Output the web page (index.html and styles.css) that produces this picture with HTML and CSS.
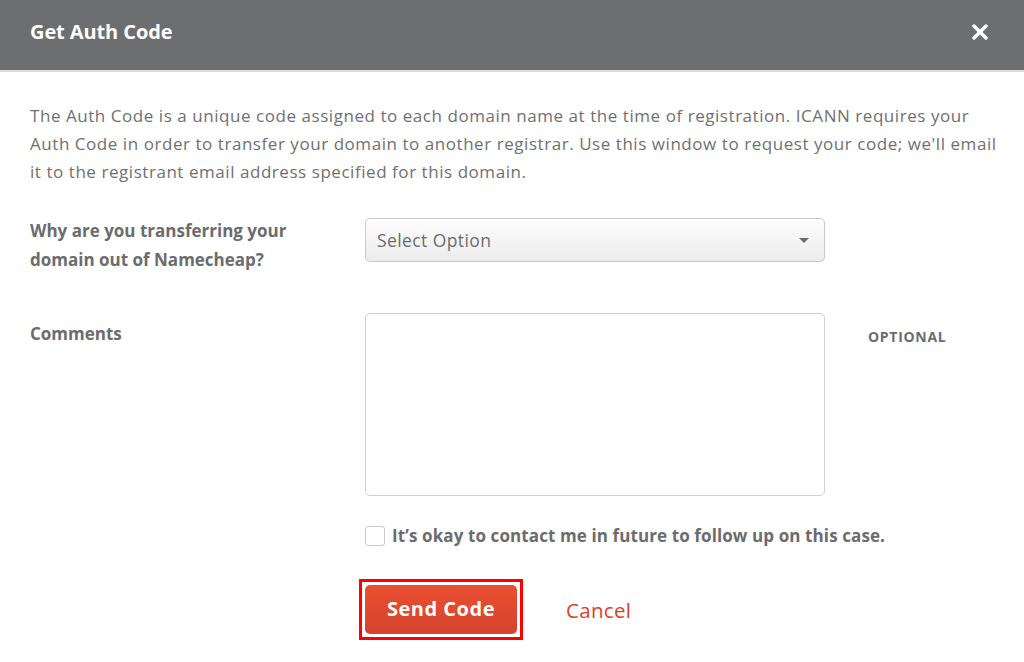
FILE: index.html
```html
<!DOCTYPE html>
<html>
<head>
<meta charset="utf-8">
<link rel="stylesheet" href="styles.css">
</head>
<body>
<div class="modal">
  <div class="modal-header">
    <h1 class="title">Get Auth Code</h1>
    <span class="close" aria-label="close">
      <svg width="16" height="16" viewBox="0 0 16 16"><path d="M2 2 L14 14 M14 2 L2 14" stroke="#fff" stroke-width="3.4" stroke-linecap="round"/></svg>
    </span>
  </div>
  <div class="modal-body">
    <p class="intro">The Auth Code is a unique code assigned to each domain name at the time of registration. ICANN requires your Auth Code in order to transfer your domain to another registrar. Use this window to request your code; we'll email it to the registrant email address specified for this domain.</p>
    <div class="row row-select">
      <label class="label">Why are you transferring your domain out of Namecheap?</label>
      <div class="select">
        <span>Select Option</span>
        <span class="caret"></span>
      </div>
      <div></div>
    </div>
    <div class="row row-comments">
      <label class="label label-comments">Comments</label>
      <div class="textarea"></div>
      <div class="optional">OPTIONAL</div>
    </div>
    <div class="row row-check">
      <div></div>
      <label class="check"><span class="box"></span>It’s okay to contact me in future to follow up on this case.</label>
    </div>
    <div class="row row-actions">
      <div></div>
      <div class="actions">
        <span class="highlight"><button class="btn">Send Code</button></span>
        <a class="cancel">Cancel</a>
      </div>
    </div>
  </div>
</div>
</body>
</html>
```

FILE: styles.css
```css
html, body {
  margin: 0;
  padding: 0;
  background: #fff;
}
body {
  font-family: "Open Sans", "Liberation Sans", sans-serif;
  color: #6b6c6e;
}
.modal-header {
  height: 63px;
  padding: 0 36px 7px 30px;
  background: #6d6e70;
  border-bottom: 2px solid #dcdcdc;
  display: flex;
  align-items: center;
  justify-content: space-between;
}
.title {
  margin: 0;
  font-size: 20px;
  font-weight: 700;
  color: #fff;
  letter-spacing: -0.1px;
}
.close {
  display: flex;
  align-items: center;
}
.modal-body {
  padding: 30px 18px 0 30px;
}
.intro {
  margin: 0;
  font-size: 17px;
  line-height: 28px;
  color: #6f7072;
  letter-spacing: 0.55px;
}
.row {
  display: grid;
  grid-template-columns: 335px 460px 1fr;
}
.row-select {
  margin-top: 30px;
  align-items: start;
}
.label {
  font-size: 17px;
  font-weight: 700;
  line-height: 29px;
  color: #6b6c6e;
  max-width: 290px;
}
.select {
  margin-top: 2px;
  height: 42px;
  border: 1px solid #c9c9c9;
  border-radius: 5px;
  background: linear-gradient(#fdfdfd, #ececec);
  display: flex;
  align-items: center;
  justify-content: space-between;
  padding: 0 15px 0 11px;
  font-size: 17.5px;
  letter-spacing: 0.4px;
  color: #6b6c6e;
}
.caret {
  width: 0;
  height: 0;
  border-left: 5px solid transparent;
  border-right: 5px solid transparent;
  border-top: 5px solid #6b6c6e;
}
.row-comments {
  margin-top: 39px;
}
.label-comments {
  padding-top: 6px;
}
.textarea {
  height: 181px;
  border: 1px solid #cfcfcf;
  border-radius: 5px;
  background: #fff;
}
.optional {
  padding: 14px 0 0 43px;
  font-size: 14px;
  font-weight: 700;
  color: #6b6c6e;
  letter-spacing: 0.7px;
}
.row-check {
  margin-top: 28px;
  grid-template-columns: 335px 1fr;
}
.check {
  display: flex;
  align-items: center;
  font-size: 17px;
  font-weight: 700;
  color: #6b6c6e;
  letter-spacing: 0.1px;
}
.box {
  width: 18px;
  height: 18px;
  border: 1px solid #c9c9c9;
  border-radius: 3px;
  margin-right: 7px;
  background: #fff;
}
.row-actions {
  margin-top: 32px;
  grid-template-columns: 329px 1fr;
}
.actions {
  display: flex;
  align-items: center;
}
.highlight {
  display: inline-block;
  border: 3px solid #ff0000;
  padding: 3px;
  line-height: 0;
}
.btn {
  width: 152px;
  height: 49px;
  border: none;
  border-radius: 5px;
  background: linear-gradient(#ea4f32, #d4432c);
  color: #fff;
  font-family: "Open Sans", "Liberation Sans", sans-serif;
  font-size: 20px;
  font-weight: 700;
  letter-spacing: 0.5px;
  padding: 0 0 3px 0;
}
.cancel {
  margin-left: 43px;
  font-size: 20.5px;
  letter-spacing: 0.3px;
  color: #dd3f28;
}
```
